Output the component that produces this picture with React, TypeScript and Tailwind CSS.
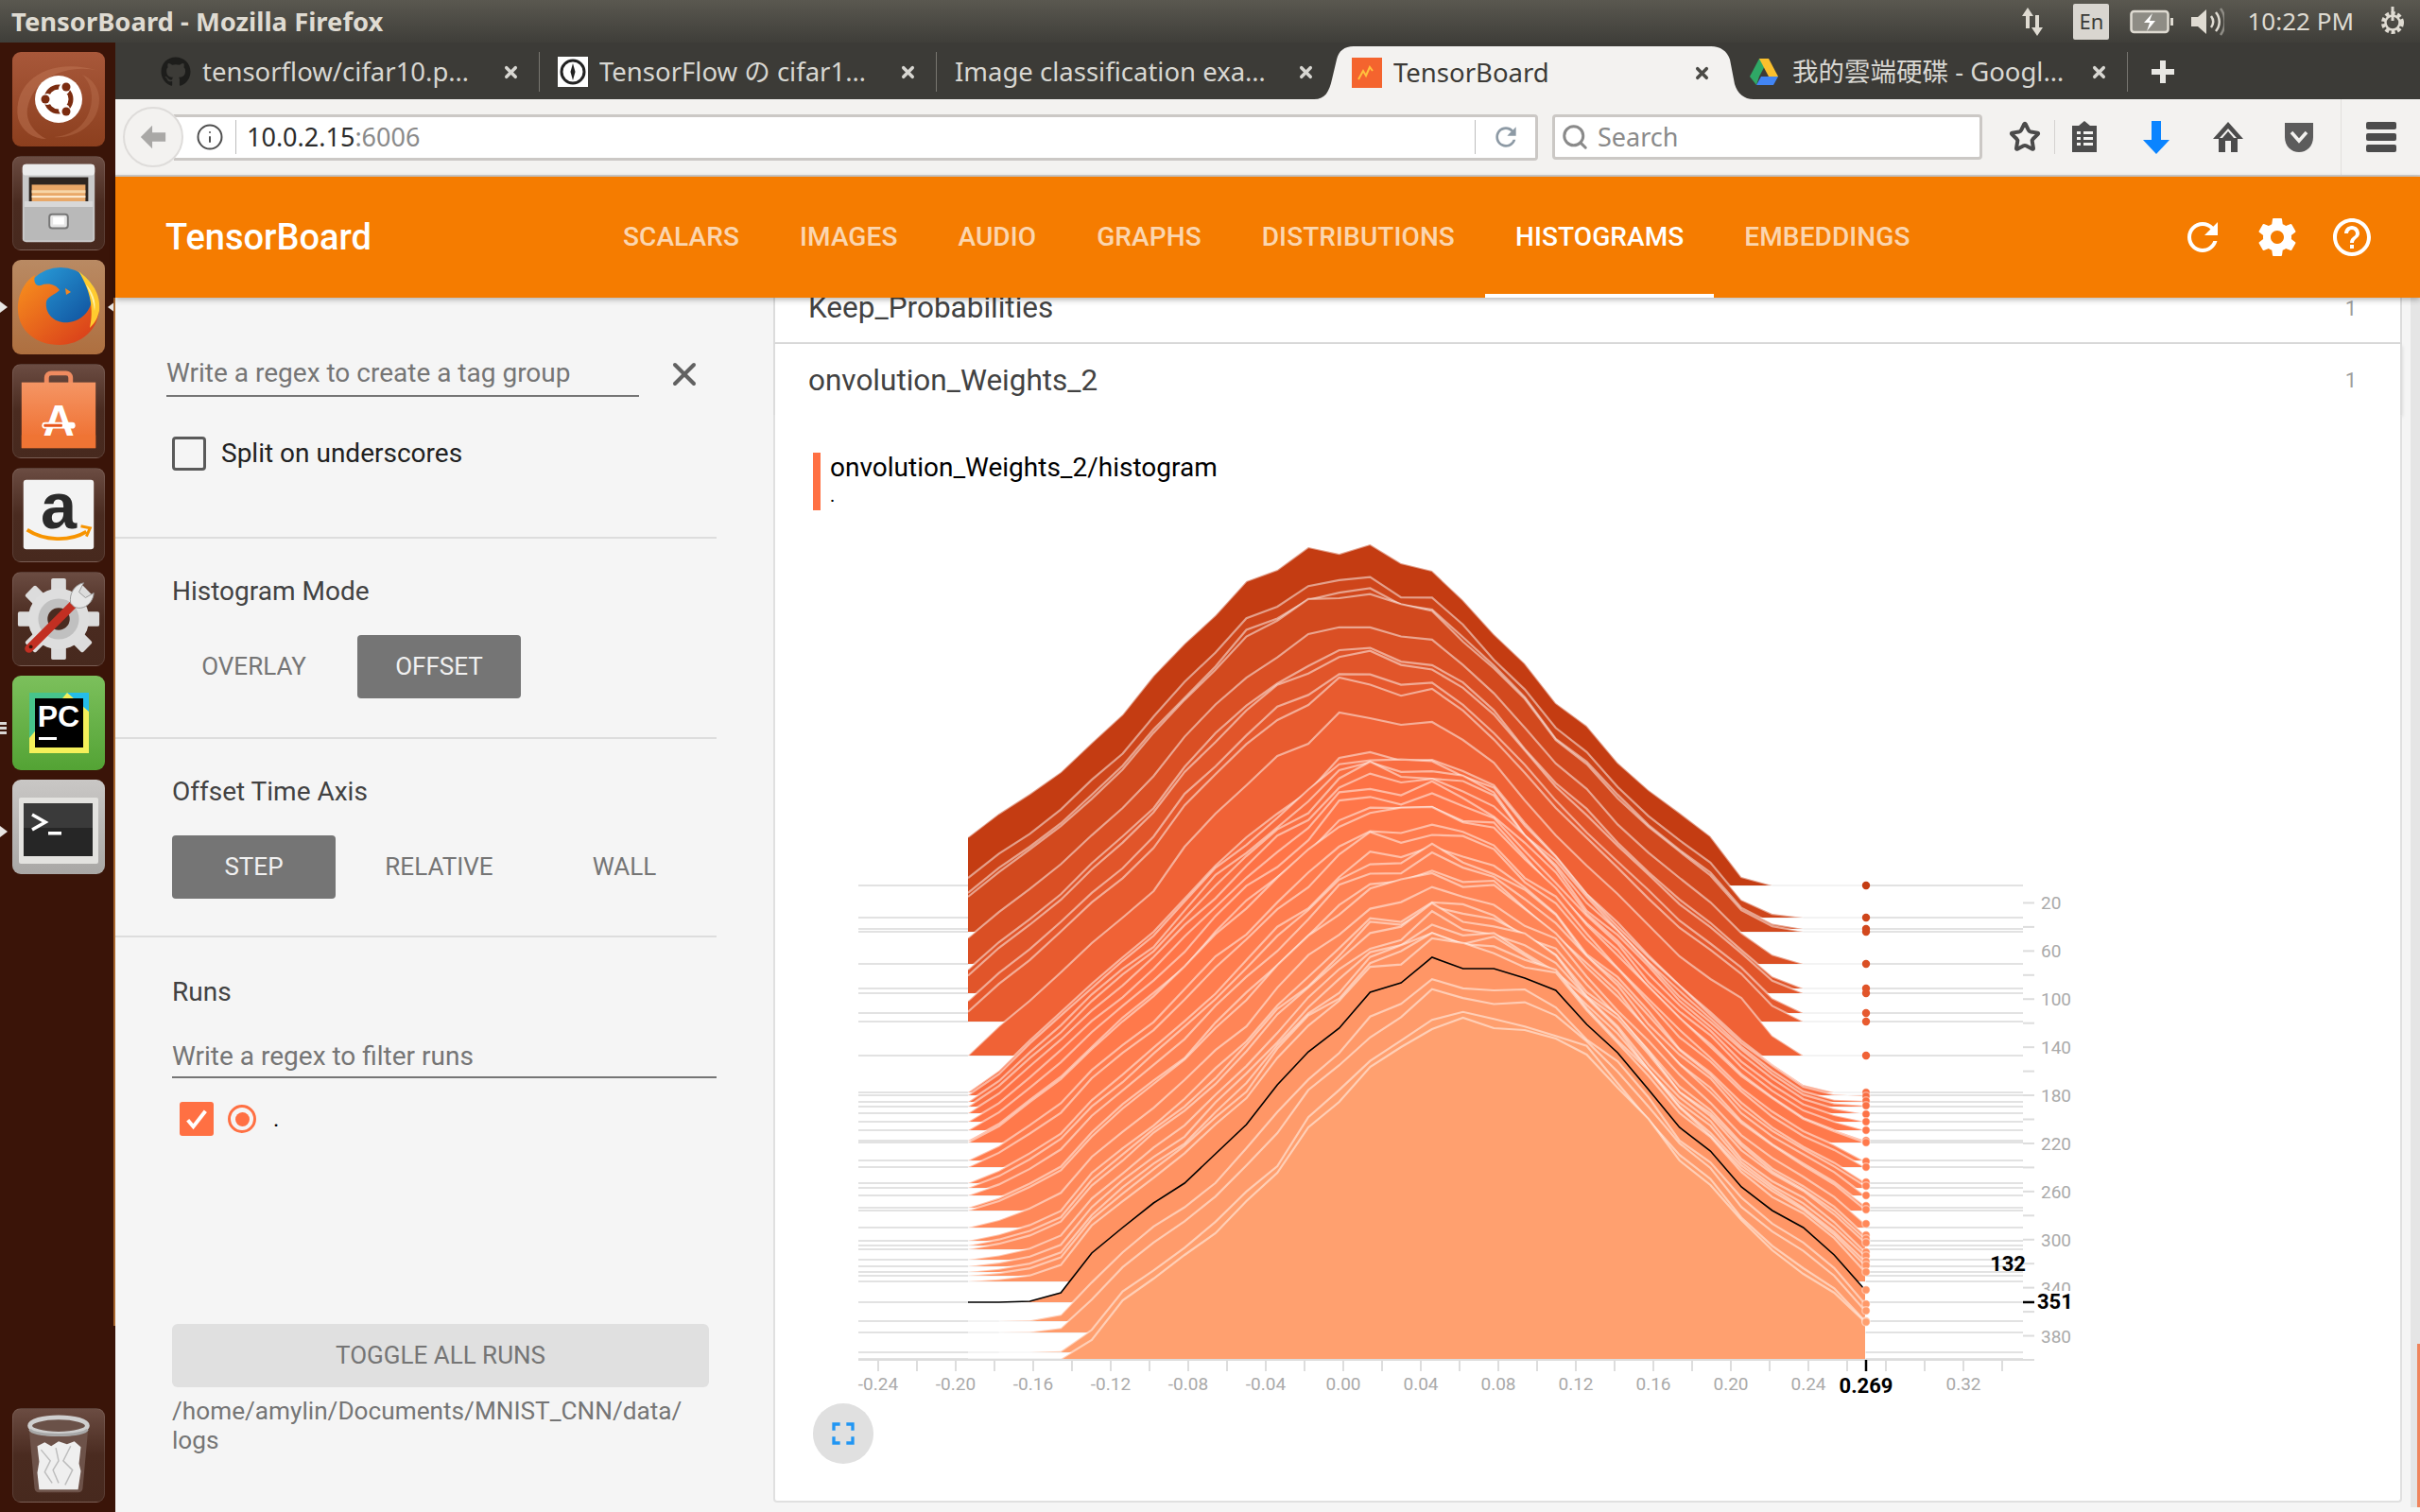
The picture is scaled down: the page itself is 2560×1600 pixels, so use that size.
import { X, Info, Search, Star } from 'lucide-react';
import { FaGithub } from 'react-icons/fa';

const chromeFont = "font-['Noto_Sans','Noto_Sans_CJK_TC',sans-serif]";
const roboto = "font-['Roboto',sans-serif]";

const refreshPath =
  'M17.65 6.35C16.2 4.9 14.21 4 12 4c-4.42 0-7.99 3.58-7.99 8s3.57 8 7.99 8c3.73 0 6.84-2.55 7.73-6h-2.08c-.82 2.33-3.04 4-5.65 4-3.31 0-6-2.69-6-6s2.69-6 6-6c1.66 0 3.14.69 4.22 1.78L13 11h7V4l-2.35 2.35z';

// ---- launcher ----

const darkTile = 'border border-white/10 bg-gradient-to-b from-[#6b4c42] via-[#4a2b20] to-[#47291e]';

function Tile({ className, children }: { className: string; children: React.ReactNode }) {
  return <div className={`h-[100px] w-[98px] shrink-0 overflow-hidden rounded-[9px] ${className}`}>{children}</div>;
}

function UbuntuIcon() {
  return (
    <svg viewBox="0 0 98 100" className="h-full w-full">
      <path d="M6 70C0 30 40 4 92 20 60 12 22 26 16 60c-2 14 8 26 20 32C22 92 10 84 6 70z" fill="#c47a58" opacity=".45" />
      <path d="M92 50c0 26-24 42-48 40 26-2 40-20 40-42 0-10-4-18-10-24 10 4 18 14 18 26z" fill="#c47a58" opacity=".35" />
      <circle cx="49" cy="50" r="25" fill="#fff" />
      <circle cx="49" cy="50" r="13" fill="none" stroke="#7b2c10" strokeWidth="5" />
      <circle cx="37" cy="50" r="6" fill="#fff" />
      <circle cx="55" cy="39" r="6" fill="#fff" />
      <circle cx="55" cy="61" r="6" fill="#fff" />
      <circle cx="35" cy="50" r="4.5" fill="#7b2c10" />
      <circle cx="57" cy="37" r="4.5" fill="#7b2c10" />
      <circle cx="57" cy="63" r="4.5" fill="#7b2c10" />
    </svg>
  );
}

function FilesIcon() {
  return (
    <svg viewBox="0 0 98 100" className="h-full w-full">
      <rect x="10" y="8" width="78" height="84" rx="4" fill="#c9c9c9" />
      <rect x="10" y="8" width="78" height="12" rx="4" fill="#ececec" />
      <rect x="17" y="22" width="64" height="26" fill="#2d2520" />
      <rect x="20" y="30" width="58" height="18" fill="#e9a868" />
      <rect x="20" y="36" width="58" height="3" fill="#f7d6a8" />
      <rect x="20" y="42" width="58" height="2" fill="#fff0d8" />
      <path d="M12 48h74v42H12z" fill="#b9b9b9" />
      <path d="M12 48h74v6H12z" fill="#d8d8d8" />
      <rect x="39" y="62" width="20" height="15" rx="3" fill="#e6e6e6" stroke="#777" strokeWidth="2" />
      <rect x="43" y="65" width="12" height="8" fill="#fff" />
    </svg>
  );
}

function FirefoxIcon() {
  return (
    <svg viewBox="0 0 98 100" className="h-full w-full">
      <defs>
        <linearGradient id="ffBlue" x1="0" y1="0" x2="1" y2="1">
          <stop offset="0" stopColor="#2aa3de" />
          <stop offset="1" stopColor="#0b3f8f" />
        </linearGradient>
        <linearGradient id="ffFox" x1="0" y1="0" x2="1" y2="1">
          <stop offset="0" stopColor="#f8921e" />
          <stop offset="1" stopColor="#d6361a" />
        </linearGradient>
      </defs>
      <circle cx="51" cy="48" r="40" fill="url(#ffBlue)" />
      <path d="M6 54C5 36 14 22 24 16 22 24 25 28 30 27 38 24 46 26 50 32 44 38 38 38 36 44 34 58 46 68 60 66 76 64 86 50 84 36L92 50C92 74 72 90 50 90 24 90 7 74 6 54z" fill="url(#ffFox)" />
      <path d="M70 12C84 22 94 36 92 54 90 62 88 66 82 72 86 54 84 34 70 12z" fill="#ffcb2f" />
      <path d="M78 26c7 8 11 18 9 28-1-10-4-18-9-28z" fill="#fff3a8" />
      <path d="M56 30l6 4-5 3z" fill="#f6861f" />
    </svg>
  );
}

function BagIcon() {
  return (
    <svg viewBox="0 0 98 100" className="h-full w-full">
      <defs>
        <linearGradient id="bag" x1="0" y1="0" x2="0" y2="1">
          <stop offset="0" stopColor="#f59564" />
          <stop offset="1" stopColor="#ee6c2b" />
        </linearGradient>
      </defs>
      <path d="M36 30V14a5 5 0 015-5h16a5 5 0 015 5v16" fill="none" stroke="#ef8b60" strokeWidth="5" />
      <rect x="9" y="19" width="80" height="71" fill="url(#bag)" />
      <rect x="9" y="76" width="80" height="14" fill="#ef7434" />
      <text x="49" y="77" textAnchor="middle" fontSize="47" fontWeight="700" fill="#fff" fontFamily="Liberation Sans">A</text>
      <rect x="31" y="62" width="36" height="7" rx="3.5" fill="#fff" />
      <rect x="33" y="64" width="20" height="3" rx="1" fill="#e8541a" />
    </svg>
  );
}

function AmazonIcon() {
  return (
    <svg viewBox="0 0 98 100" className="h-full w-full">
      <rect x="11" y="12" width="76" height="75" rx="3" fill="#f3f3f3" />
      <text x="49" y="64" textAnchor="middle" fontSize="70" fontWeight="700" fill="#2a2a2a" fontFamily="Liberation Sans">a</text>
      <path d="M15 66c18 12 46 13 64 2" fill="none" stroke="#f79400" strokeWidth="4" />
      <path d="M73 62l10 2-4 9" fill="none" stroke="#f79400" strokeWidth="3" />
    </svg>
  );
}

function ToolsIcon() {
  const teeth = [0, 45, 90, 135, 180, 225, 270, 315];
  return (
    <svg viewBox="0 0 98 100" className="h-full w-full">
      {teeth.map((a) => (
        <rect key={a} x="41" y="6" width="16" height="18" rx="2" fill="#dcdcdc" transform={`rotate(${a} 49 50)`} />
      ))}
      <circle cx="49" cy="50" r="33" fill="#dedede" />
      <circle cx="49" cy="50" r="22" fill="#c0c0c0" />
      <circle cx="49" cy="50" r="12" fill="#4a2b20" />
      <path d="M17 82L66 33" stroke="#c22f22" strokeWidth="9" strokeLinecap="round" />
      <circle cx="19" cy="80" r="2" fill="#3a1408" />
      <path d="M62 33c-2-10 4-20 14-22l-5 10 7 6 9-5c-1 12-12 19-21 15z" fill="#e6e6e6" stroke="#999" strokeWidth="1" />
    </svg>
  );
}

function PyCharmIcon() {
  return (
    <svg viewBox="0 0 98 100" className="h-full w-full">
      <rect x="18" y="18" width="63" height="64" fill="#f4f05a" />
      <path d="M18 18h40L18 66z" fill="#47c48c" />
      <path d="M58 18h23v20z" fill="#25bde8" />
      <rect x="24" y="24" width="51" height="52" fill="#000" />
      <text x="49" y="54" textAnchor="middle" fontSize="32" fontWeight="700" fill="#fff" fontFamily="Liberation Sans">PC</text>
      <rect x="28" y="65" width="19" height="3" fill="#fff" />
    </svg>
  );
}

function TerminalIcon() {
  return (
    <svg viewBox="0 0 98 100" className="h-full w-full">
      <rect x="7" y="19" width="84" height="70" rx="2" fill="#e3e2df" />
      <rect x="12" y="25" width="73" height="56" fill="#262626" />
      <rect x="12" y="25" width="73" height="26" fill="#3a3a3a" />
      <path d="M21 37l14 8-14 8" fill="none" stroke="#fff" strokeWidth="3.5" />
      <rect x="38" y="55" width="14" height="3.5" fill="#fff" />
    </svg>
  );
}

function TrashIcon() {
  return (
    <svg viewBox="0 0 98 100" className="h-full w-full">
      <path d="M17 20l6 66a5 5 0 005 4h42a5 5 0 005-4l6-66z" fill="#6d5249" />
      <path d="M26 40l8-4 7 4 8-5 9 3 8-3 7 6-2 18 2 8-3 20H28l-2-18 2-12z" fill="#efefef" />
      <path d="M30 44l10 12-6 12 8 12M62 40l-8 16 10 10-8 16M46 42l3 14-6 10 6 14" fill="none" stroke="#bdbdbd" strokeWidth="1.5" />
      <ellipse cx="49" cy="18" rx="31" ry="9" fill="#6a5148" stroke="#cfcfcf" strokeWidth="5" />
      <path d="M18 22c4 8 58 8 62 0" fill="none" stroke="#a8a8a8" strokeWidth="3" />
    </svg>
  );
}

function Launcher() {
  return (
    <div className="relative flex h-[1555px] w-[122px] shrink-0 flex-col items-center gap-[10px] bg-[#3a1408] pl-[1px] pt-[10px] pb-[10px]">
      <Tile className="bg-gradient-to-b from-[#a8583a] to-[#8c3f1e]"><UbuntuIcon /></Tile>
      <Tile className={darkTile}><FilesIcon /></Tile>
      <Tile className="bg-gradient-to-b from-[#b98a63] to-[#ae6f3f]"><FirefoxIcon /></Tile>
      <Tile className={darkTile}><BagIcon /></Tile>
      <Tile className={darkTile}><AmazonIcon /></Tile>
      <Tile className={darkTile}><ToolsIcon /></Tile>
      <Tile className="bg-gradient-to-b from-[#7cc05c] to-[#53a334]"><PyCharmIcon /></Tile>
      <Tile className="bg-gradient-to-b from-[#c9c7c5] to-[#a9a7a5]"><TerminalIcon /></Tile>
      <div className="mt-auto" />
      <Tile className={darkTile}><TrashIcon /></Tile>
      {/* running-app pips */}
      <span className="absolute left-0 top-[274px] h-0 w-0 border-y-[6px] border-l-[8px] border-y-transparent border-l-[#e8e6e3]" />
      <span className="absolute right-0 top-[274px] h-0 w-0 border-y-[6px] border-r-[8px] border-y-transparent border-r-[#e8e6e3]" />
      <span className="absolute left-0 top-[719px] flex flex-col gap-[2px]">
        <span className="h-[3px] w-[7px] bg-[#d8d6d3]" />
        <span className="h-[3px] w-[7px] bg-[#d8d6d3]" />
        <span className="h-[3px] w-[7px] bg-[#d8d6d3]" />
      </span>
      <span className="absolute left-0 top-[829px] h-0 w-0 border-y-[6px] border-l-[8px] border-y-transparent border-l-[#e8e6e3]" />
      <span className="absolute right-0 top-[270px] h-[1088px] w-[2px] bg-[#a8672e]" />
    </div>
  );
}

// ---- window chrome ----

function TitleBar() {
  return (
    <div className={`flex h-[45px] items-center bg-gradient-to-b from-[#5a5850] to-[#3f3e39] pl-[12px] ${chromeFont}`}>
      <span className="text-[27.4px] font-bold text-[#dfdbd2]">TensorBoard - Mozilla Firefox</span>
      <div className="ml-auto flex items-center text-[#dfdbd2]">
        <svg viewBox="0 0 30 38" className="h-[38px] w-[30px]">
          <path d="M10 4l-6 9h4v13h4V13h4zM20 34l6-9h-4V12h-4v13h-4z" fill="#dfdbd2" />
        </svg>
        <span className="ml-[28px] flex h-[38px] w-[38px] items-center justify-center rounded-[2px] bg-[#d9d6d0] text-[22px] text-[#3c3b37]">En</span>
        <svg viewBox="0 0 46 26" className="ml-[22px] h-[26px] w-[46px]">
          <rect x="1.5" y="2" width="39" height="22" rx="3" fill="#8e8c85" stroke="#dfdbd2" strokeWidth="2.5" />
          <path d="M43 9h3v8h-3z" fill="#dfdbd2" />
          <path d="M24 4l-9 10 6 0-3 9 9-11-6 0z" fill="#fff" />
        </svg>
        <svg viewBox="0 0 38 34" className="ml-[16px] h-[34px] w-[38px]">
          <path d="M3 12h7l9-8v26l-9-8H3z" fill="#dfdbd2" />
          <path d="M24 11c3 4 3 8 0 12M29 7c5 6 5 14 0 20" fill="none" stroke="#dfdbd2" strokeWidth="2.5" />
          <path d="M34 3c6 8 6 20 0 28" fill="none" stroke="#8e8c85" strokeWidth="2.5" />
        </svg>
        <span className="ml-[24px] text-[26px] text-[#dfdbd2]">10:22 PM</span>
        <svg viewBox="0 0 32 36" className="ml-[25px] mr-[13px] h-[36px] w-[32px]">
          <circle cx="16" cy="19" r="10" fill="none" stroke="#dfdbd2" strokeWidth="4" strokeDasharray="4 2.5" />
          <circle cx="16" cy="19" r="7.5" fill="none" stroke="#dfdbd2" strokeWidth="2.5" />
          <path d="M16 2v15" stroke="#dfdbd2" strokeWidth="3" />
        </svg>
      </div>
    </div>
  );
}

function CloseX({ dark }: { dark?: boolean }) {
  return <X size={19} strokeWidth={4.5} className={dark ? 'shrink-0 text-[#4a4a46]' : 'shrink-0 text-[#d8d7d2]'} />;
}

function TabStrip() {
  const tabText = 'flex-1 truncate text-[27.5px] leading-[38px]';
  return (
    <div className={`flex h-[60px] items-end bg-[#3c3b37] pl-[28px] ${chromeFont}`}>
      <div className="mb-[8px] flex h-[42px] w-[421px] items-center gap-[12px] border-r border-[#77756f] pl-[20px] pr-[20px]">
        <FaGithub size={32} className="shrink-0 text-[#1d1d1b]" />
        <span className={`${tabText} text-[#d8d7d2]`}>tensorflow/cifar10.p…</span>
        <CloseX />
      </div>
      <div className="mb-[8px] flex h-[42px] w-[420px] items-center gap-[12px] border-r border-[#77756f] pl-[19px] pr-[20px]">
        <svg viewBox="0 0 32 32" className="h-[32px] w-[32px] shrink-0">
          <rect width="32" height="32" fill="#fff" />
          <circle cx="16" cy="16" r="12" fill="none" stroke="#222" strokeWidth="3" />
          <path d="M16 7l2.5 9L16 25l-2.5-9z" fill="#222" />
        </svg>
        <span className={`${tabText} text-[#d8d7d2]`}>TensorFlow の cifar1…</span>
        <CloseX />
      </div>
      <div className="mb-[8px] flex h-[42px] w-[421px] items-center pl-[19px] pr-[21px]">
        <span className={`${tabText} text-[#d8d7d2]`}>Image classification exa…</span>
        <CloseX />
      </div>
      <div className="relative z-10 -ml-[22px] flex h-[56px] w-[465px] items-center gap-[12px] pl-[40px] pr-[45px]">
        <svg viewBox="0 0 465 56" className="absolute inset-0 h-full w-full">
          <path d="M0 56c12 0 16-8 19-21l5-21C26 5 32 0 42 0h378c10 0 17 5 20 14l5 26c3 10 10 16 20 16z" fill="#f3f2f0" />
        </svg>
        <svg viewBox="0 0 32 32" className="relative h-[32px] w-[32px] shrink-0">
          <rect width="32" height="32" fill="#f4642e" />
          <path d="M7 23l5-9 3 5 4-9 3 4" fill="none" stroke="#ffc13d" strokeWidth="2" />
        </svg>
        <span className={`${tabText} relative text-[#3c3b37]`}>TensorBoard</span>
        <span className="relative"><CloseX dark /></span>
      </div>
      <div className="relative z-20 -ml-[23px] mb-[8px] flex h-[42px] w-[419px] items-center gap-[14px] border-r border-[#77756f] pl-[18px] pr-[20px]">
        <svg viewBox="0 0 32 32" className="h-[32px] w-[32px] shrink-0">
          <path d="M11 2h10L11 21H1z" fill="#2fa866" />
          <path d="M21 2l10 19H21L11 2z" fill="#fbc02d" />
          <path d="M8 30l5-9h18l-5 9z" fill="#4285f4" />
          <path d="M1 21h10l-3 9z" fill="#2fa866" />
        </svg>
        <span className={`${tabText} text-[#d8d7d2]`}>我的雲端硬碟 - Googl…</span>
        <CloseX />
      </div>
      <svg viewBox="0 0 28 28" className="mb-[15px] ml-[23px] h-[28px] w-[28px]">
        <path d="M11 2h6v9h9v6h-9v9h-6v-9H2v-6h9z" fill="#e8e7e3" />
      </svg>
    </div>
  );
}

function Toolbar() {
  return (
    <div className={`flex h-[82px] items-center border-b-2 border-[#cfcdca] bg-[#f3f2f0] pl-[8px] ${chromeFont}`}>
      <div className="relative z-10 flex h-[64px] w-[64px] shrink-0 items-center justify-center rounded-full border-2 border-[#dedcda] bg-[#f3f2f0]">
        <svg viewBox="0 0 32 32" className="h-[30px] w-[30px]">
          <path d="M15 3L2 16l13 13v-8h15V11H15z" fill="#a9a8a6" />
        </svg>
      </div>
      <div className="-ml-[10px] flex h-[49px] w-[1443px] shrink-0 items-center rounded-r-[4px] border-[3px] border-l-0 border-[#cbc8c5] bg-white">
        <Info size={30} strokeWidth={1.6} className="ml-[23px] shrink-0 text-[#4f4f4f]" />
        <span className="ml-[12px] h-[36px] w-px bg-[#bdbdbd]" />
        <span className="ml-[11px] text-[27px] text-[#2b2b2b]">10.0.2.15<span className="text-[#8a8a8a]">:6006</span></span>
        <span className="ml-auto h-[36px] w-px bg-[#bdbdbd]" />
        <svg viewBox="0 0 24 24" className="ml-[16px] mr-[15px] h-[32px] w-[32px] shrink-0" fill="#8d9aa5"><path d={refreshPath} /></svg>
      </div>
      <div className="ml-[15px] flex h-[48px] w-[455px] shrink-0 items-center rounded-[4px] border-[3px] border-[#cbc8c5] bg-white">
        <Search size={30} strokeWidth={2.4} className="ml-[6px] shrink-0 text-[#8a8a8a]" />
        <span className="ml-[9px] text-[27px] text-[#8a8a8a]">Search</span>
      </div>
      <Star size={34} strokeWidth={2.8} className="ml-[28px] shrink-0 text-[#4a4a4a]" />
      <span className="ml-[14px] h-[36px] w-px bg-[#d5d3d0]" />
      <svg viewBox="0 0 32 36" className="ml-[15px] h-[36px] w-[32px] shrink-0">
        <path d="M3 6h7l6-5 6 5h7v28H3z" fill="#4c4c4c" />
        <path d="M8 12h4v3H8zm7 0h10v3H15zM8 18h4v3H8zm7 0h10v3H15zM8 24h4v3H8zm7 0h10v3H15z" fill="#f3f2f0" />
      </svg>
      <svg viewBox="0 0 30 36" className="ml-[45px] h-[36px] w-[30px] shrink-0">
        <path d="M10 1h10v20h9L15 36 1 21h9z" fill="#0a84ff" />
      </svg>
      <svg viewBox="0 0 34 36" className="ml-[44px] h-[36px] w-[34px] shrink-0">
        <path d="M17 2L1 20h6v14h7V22h6v12h7V20h6z" fill="#4c4c4c" />
        <path d="M17 9l-9 10h18z" fill="#f3f2f0" />
        <path d="M17 12l-6 7h12z" fill="#4c4c4c" />
      </svg>
      <svg viewBox="0 0 32 36" className="ml-[42px] h-[36px] w-[32px] shrink-0">
        <path d="M1 3h30v15c0 10-7 16-15 16S1 28 1 18z" fill="#5c5c5c" />
        <path d="M8 13l8 9 8-9" fill="none" stroke="#f3f2f0" strokeWidth="3.5" />
      </svg>
      <span className="ml-[28px] h-[80px] w-px bg-[#e2e0dd]" />
      <div className="ml-[26px] flex flex-col gap-[4px]">
        <span className="h-[8px] w-[32px] rounded-[2px] bg-[#4c4c4c]" />
        <span className="h-[8px] w-[32px] rounded-[2px] bg-[#4c4c4c]" />
        <span className="h-[8px] w-[32px] rounded-[2px] bg-[#4c4c4c]" />
      </div>
    </div>
  );
}

// ---- tensorboard ----

const navItems = ['SCALARS', 'IMAGES', 'AUDIO', 'GRAPHS', 'DISTRIBUTIONS', 'HISTOGRAMS', 'EMBEDDINGS'];

function Header() {
  return (
    <div className={`relative z-20 flex h-[128px] items-center bg-[#f57c00] shadow-[0_2px_6px_rgba(0,0,0,0.3)] pl-[53px] ${roboto}`}>
      <span className="w-[452px] text-[38px] font-medium text-white">TensorBoard</span>
      <nav className="flex h-full">
        {navItems.map((item) => (
          <div
            key={item}
            className={
              item === 'HISTOGRAMS'
                ? 'flex h-full items-center border-b-4 border-white px-[32px] pt-[4px] text-[28px] font-medium tracking-[0.1px] text-white'
                : 'flex h-full items-center px-[32px] text-[28px] font-medium tracking-[0.1px] text-white/70'
            }
          >
            {item}
          </div>
        ))}
      </nav>
      <div className="ml-auto flex items-center gap-[31px] pr-[48px]">
        <svg viewBox="0 0 24 24" className="h-[48px] w-[48px]" fill="#fff"><path d={refreshPath} /></svg>
        <svg viewBox="0 0 24 24" className="h-[48px] w-[48px]" fill="#fff"><path d="M19.43 12.98c.04-.32.07-.64.07-.98s-.03-.66-.07-.98l2.11-1.65c.19-.15.24-.42.12-.64l-2-3.46c-.12-.22-.39-.3-.61-.22l-2.49 1c-.52-.4-1.08-.73-1.69-.98l-.38-2.65C14.46 2.18 14.25 2 14 2h-4c-.25 0-.46.18-.49.42l-.38 2.65c-.61.25-1.17.59-1.69.98l-2.49-1c-.23-.09-.49 0-.61.22l-2 3.46c-.13.22-.07.49.12.64l2.11 1.65c-.04.32-.07.65-.07.98s.03.66.07.98l-2.11 1.65c-.19.15-.24.42-.12.64l2 3.46c.12.22.39.3.61.22l2.49-1c.52.4 1.08.73 1.69.98l.38 2.65c.03.24.24.42.49.42h4c.25 0 .46-.18.49-.42l.38-2.65c.61-.25 1.17-.59 1.69-.98l2.49 1c.23.09.49 0 .61-.22l2-3.46c.12-.22.07-.49-.12-.64l-2.11-1.65zM12 15.5c-1.93 0-3.5-1.57-3.5-3.5s1.57-3.5 3.5-3.5 3.5 1.57 3.5 3.5-1.57 3.5-3.5 3.5z" /></svg>
        <svg viewBox="0 0 24 24" className="h-[48px] w-[48px]" fill="#fff"><path d="M11 18h2v-2h-2v2zm1-16C6.48 2 2 6.48 2 12s4.48 10 10 10 10-4.48 10-10S17.52 2 12 2zm0 18c-4.41 0-8-3.59-8-8s3.59-8 8-8 8 3.59 8 8-3.59 8-8 8zm0-14c-2.21 0-4 1.79-4 4h2c0-1.1.9-2 2-2s2 .9 2 2c0 2-3 1.75-3 5h2c0-2.25 3-2.5 3-5 0-2.21-1.79-4-4-4z" /></svg>
      </div>
    </div>
  );
}

function ModeButton({ label, active }: { label: string; active?: boolean }) {
  return (
    <div
      className={
        active
          ? 'flex h-[67px] w-[173px] items-center justify-center rounded-[4px] bg-[#757575] text-[26px] text-white/90'
          : 'flex h-[67px] w-[173px] items-center justify-center text-[26px] text-[#757575]'
      }
    >
      {label}
    </div>
  );
}

function Sidebar() {
  return (
    <div className={`w-[696px] shrink-0 pr-[60px] ${roboto}`}>
      <div className="h-[255px] border-b-2 border-[#ddd] pt-[57px]">
        <div className="flex items-center pl-[54px]">
          <div className="h-[48px] w-[500px] border-b-2 border-[#757575] text-[28px] leading-[46px] text-[#757575]">Write a regex to create a tag group</div>
          <X size={40} strokeWidth={2.4} className="ml-[28px] text-[#616161]" />
        </div>
        <div className="mt-[39px] flex items-center pl-[60px]">
          <span className="h-[36px] w-[36px] rounded-[4px] border-[3px] border-[#5a5a5a]" />
          <span className="ml-[16px] text-[28px] text-[#212121]">Split on underscores</span>
        </div>
      </div>
      <div className="h-[212px] border-b-2 border-[#ddd] pl-[60px] pt-[35px]">
        <div className="pt-[1px] text-[28px] leading-[40px] text-[#424242]">Histogram Mode</div>
        <div className="mt-[26px] flex gap-[23px]">
          <ModeButton label="OVERLAY" />
          <ModeButton label="OFFSET" active />
        </div>
      </div>
      <div className="h-[210px] border-b-2 border-[#ddd] pl-[60px] pt-[35px]">
        <div className="pt-[1px] text-[28px] leading-[40px] text-[#424242]">Offset Time Axis</div>
        <div className="mt-[26px] flex gap-[23px]">
          <ModeButton label="STEP" active />
          <ModeButton label="RELATIVE" />
          <ModeButton label="WALL" />
        </div>
      </div>
      <div className="pl-[60px] pt-[38px]">
        <div className="text-[28px] leading-[40px] text-[#424242]">Runs</div>
        <div className="mt-[22px] h-[49px] border-b-2 border-[#757575] pt-[2px] text-[28px] leading-[47px] text-[#757575]">Write a regex to filter runs</div>
        <div className="mt-[25px] flex items-center pl-[8px]">
          <span className="flex h-[36px] w-[36px] items-center justify-center rounded-[3px] bg-[#ff7043]">
            <svg viewBox="0 0 24 24" className="h-[28px] w-[28px]"><path d="M4 13l5 6L20 5" fill="none" stroke="#fff" strokeWidth="3.4" /></svg>
          </span>
          <span className="ml-[15px] flex h-[30px] w-[30px] items-center justify-center rounded-full border-[3px] border-[#ff7043]">
            <span className="h-[15px] w-[15px] rounded-full bg-[#ff7043]" />
          </span>
          <span className="ml-[18px] text-[24px] text-black">.</span>
        </div>
        <div className="mt-[199px] flex h-[67px] w-[568px] items-center justify-center rounded-[6px] bg-[#e0e0e0] text-[26px] text-[#757575]">TOGGLE ALL RUNS</div>
        <div className="mt-[10px] text-[26.2px] leading-[31px] text-[#757575]">
          /home/amylin/Documents/MNIST_CNN/data/
          <br />
          logs
        </div>
      </div>
    </div>
  );
}

// ---- histogram chart (coordinates in the svg are page pixels) ----

const baselines = [936, 970, 982, 985, 1019, 1045, 1050, 1071, 1080, 1116, 1155, 1158, 1165, 1170, 1177, 1186, 1195, 1206, 1208, 1227, 1234, 1251, 1256, 1264, 1277, 1280, 1298, 1312, 1317, 1321, 1332, 1339, 1345, 1349, 1355, 1377, 1397, 1409, 1430, 1437];
const hoverDots = [936, 970, 982, 985, 1019, 1045, 1050, 1071, 1080, 1116, 1155, 1159, 1164, 1169, 1178, 1186, 1195, 1206, 1208, 1228, 1234, 1250, 1254, 1264, 1275, 1279, 1294, 1306, 1310, 1314, 1324, 1328, 1334, 1338, 1345, 1364, 1379, 1386, 1397, 1398];

const binX = Array.from({ length: 30 }, (_, k) => 1024 + (k * 949) / 29);

const hoverSeries = 35;
const keyCurves: Record<number, number[]> = {
  0: [885, 860, 839, 816, 785, 755, 714, 680, 650, 614, 602, 578, 585, 575, 595, 603, 634, 670, 701, 743, 767, 806, 835, 859, 884, 927, 936, 936, 936, 936],
  9: [1116, 1085, 1058, 1028, 997, 970, 942, 895, 860, 830, 799, 786, 753, 759, 766, 763, 782, 806, 846, 883, 915, 945, 978, 1011, 1035, 1055, 1095, 1116, 1116, 1116],
  10: [1155, 1132, 1100, 1070, 1040, 1012, 985, 950, 915, 885, 860, 837, 801, 795, 804, 803, 815, 830, 870, 905, 945, 975, 1010, 1042, 1070, 1100, 1125, 1147, 1155, 1155],
  35: [1377, 1377, 1376, 1367, 1325, 1298, 1272, 1251, 1220, 1189, 1147, 1112, 1087, 1049, 1039, 1012, 1024, 1024, 1034, 1047, 1083, 1113, 1152, 1192, 1217, 1255, 1280, 1298, 1327, 1364],
  39: [1437, 1437, 1437, 1437, 1417, 1375, 1352, 1327, 1304, 1270, 1240, 1192, 1165, 1128, 1107, 1088, 1076, 1087, 1089, 1098, 1115, 1150, 1183, 1227, 1253, 1290, 1322, 1347, 1367, 1398],
};
const keyIds = [0, 9, 10, 35, 39];

const colorStops: [number, number[]][] = [
  [0, [0xc4, 0x3c, 0x12]],
  [0.1, [0xd2, 0x49, 0x1e]],
  [0.36, [0xf0, 0x62, 0x36]],
  [0.5, [0xff, 0x75, 0x48]],
  [1, [0xff, 0xa0, 0x6f]],
];

function seriesColor(baseline: number) {
  const t = (baseline - 936) / 501;
  for (let s = 1; s < colorStops.length; s++) {
    const [t0, c0] = colorStops[s - 1];
    const [t1, c1] = colorStops[s];
    if (t <= t1) {
      const f = (t - t0) / (t1 - t0);
      return `rgb(${c0.map((c, j) => Math.round(c + (c1[j] - c) * f)).join(',')})`;
    }
  }
  return 'rgb(255,160,111)';
}

function seriesHeights(i: number) {
  const b = baselines[i];
  const hi = keyIds.findIndex((id) => id >= i);
  const idB = keyIds[hi];
  const idA = hi === 0 ? idB : keyIds[hi - 1];
  const f = idA === idB ? 0 : (b - baselines[idA]) / (baselines[idB] - baselines[idA]);
  const isKey = keyIds.includes(i);
  const amount = i < 10 ? 0.006 : 0.01;
  return binX.map((_, k) => {
    const hA = baselines[idA] - keyCurves[idA][k];
    const hB = baselines[idB] - keyCurves[idB][k];
    const h = hA + (hB - hA) * f;
    if (k === 29) return b - hoverDots[i];
    const jitter = isKey ? 0 : (Math.sin(k * 2.1 + i * 0.9) + Math.sin(k * 4.7 + i * 1.7)) * amount;
    return Math.max(0, h * (1 + jitter));
  });
}

function HistogramChart() {
  const xTicks = Array.from({ length: 30 }, (_, n) => 929 + n * 41);
  const xLabels = ['-0.24', '-0.20', '-0.16', '-0.12', '-0.08', '-0.04', '0.00', '0.04', '0.08', '0.12', '0.16', '0.20', '0.24', '', '0.32'];
  const yLabels = [20, 60, 100, 140, 180, 220, 260, 300, 340, 380];
  const yTicks = [40, 80, 120, 160, 200, 240, 280, 320, 360, 400];
  const toY = (s: number) => 929 + s * 1.2725;

  return (
    <svg viewBox="820 560 1719 920" className="block h-[920px] w-[1719px]" fontFamily="Roboto, sans-serif">
      {baselines.map((b) => (
        <g key={b}>
          <path d={`M908 ${b}H1024`} stroke="#e2e2e2" strokeWidth="2" />
          <path d={`M1024 ${b}H1974`} stroke="#f3f3f3" strokeWidth="2" />
          <path d={`M1974 ${b}H2140`} stroke="#e2e2e2" strokeWidth="2" />
        </g>
      ))}

      {baselines.map((b, i) => {
        const isHover = i === hoverSeries;
        const heights = seriesHeights(i);
        const first = isHover ? 0 : Math.max(0, heights.findIndex((h) => h > 0) - (heights[0] > 0 ? 0 : 1));
        let last = 29;
        while (last > 0 && heights[last] <= 0) last--;
        const endK = Math.min(29, last + 1);
        const pts = binX.map((x, k) => `${x.toFixed(1)},${(b - heights[k]).toFixed(1)}`).slice(first, endK + 1);
        const start = binX[first].toFixed(1);
        const end = binX[endK].toFixed(1);
        return (
          <g key={b}>
            <polygon points={`${start},${b} ${pts.join(' ')} ${end},${b}`} fill={seriesColor(b)} />
            <polyline points={pts.join(' ')} fill="none" stroke={isHover ? '#000' : '#fff'} strokeOpacity={isHover ? 1 : 0.5} strokeWidth={isHover ? 1.6 : 2.2} />
          </g>
        );
      })}

      {hoverDots.map((y, i) => (
        <circle key={i} cx="1974" cy={y} r="4.2" fill={seriesColor(baselines[i])} stroke="#fff" strokeOpacity={i > 9 ? 0.4 : 0} strokeWidth="1.5" />
      ))}

      {/* x axis */}
      <path d="M908 1438H2140" stroke="#ddd" strokeWidth="2" />
      {xTicks.map((x) => (
        <path key={x} d={`M${x} 1438V1450`} stroke="#ddd" strokeWidth="2" />
      ))}
      {xLabels.map((l, n) => (
        <text key={n} x={929 + n * 82} y="1470" textAnchor="middle" fontSize="19" fill="#aaa">{l}</text>
      ))}
      <path d="M1974 1438V1450" stroke="#000" strokeWidth="2.5" />
      <rect x="1938" y="1452" width="76" height="26" fill="#fff" />
      <text x="1974" y="1473" textAnchor="middle" fontSize="22" fontWeight="700" fill="#000">0.269</text>

      {/* y axis */}
      {yTicks.map((s) => (
        <path key={s} d={`M2140 ${toY(s)}H2152`} stroke="#ddd" strokeWidth="2" />
      ))}
      {yLabels.map((s) => (
        <g key={s}>
          <path d={`M2140 ${toY(s)}H2152`} stroke="#ddd" strokeWidth="2" />
          <text x="2159" y={toY(s) + 7} fontSize="19" fill="#aaa">{s}</text>
        </g>
      ))}
      <rect x="2153" y="1365" width="44" height="26" fill="#fff" />
      <path d="M2140 1377H2152" stroke="#000" strokeWidth="2.5" />
      <text x="2155" y="1384" fontSize="22" fontWeight="700" fill="#000">351</text>
      <text x="2143" y="1344" textAnchor="end" fontSize="22" fontWeight="700" fill="#000">132</text>
    </svg>
  );
}

function MainPane() {
  return (
    <div className={`w-[1732px] shrink-0 overflow-hidden ${roboto}`}>
      <div className="-mt-[27px] flex h-[76px] w-[1723px] items-center justify-between border-x-2 border-b-2 border-[#dcdcdc] bg-white pl-[35px] pr-[46px] pt-[2px]">
        <span className="text-[31.5px] text-[#424242]">Keep_Probabilities</span>
        <span className="text-[22px] text-[#9e9e9e]">1</span>
      </div>
      <div className="flex h-[75px] w-[1723px] items-center justify-between border-x-2 border-[#dcdcdc] bg-white pl-[35px] pr-[46px] pt-[2px] shadow-[0_2px_4px_rgba(0,0,0,0.15)]">
        <span className="text-[31.5px] text-[#424242]">onvolution_Weights_2</span>
        <span className="text-[22px] text-[#9e9e9e]">1</span>
      </div>
      <div className="h-[1151px] w-[1723px] rounded-b-[4px] border-x-2 border-b-2 border-[#e0e0e0] bg-white pt-[40px]">
        <div className="ml-[40px] flex h-[61px]">
          <span className="w-[8px] bg-[#ff7043]" />
          <div className="-mt-[1px] ml-[10px] text-[28px] leading-[34px] text-black">
            onvolution_Weights_2/histogram
            <div className="text-[20px] leading-[24px]">.</div>
          </div>
        </div>
        <div className="mt-[21px]"><HistogramChart /></div>
        <div className="ml-[40px] mt-[4px] flex h-[64px] w-[64px] items-center justify-center rounded-full bg-[#e0e0e0]">
          <svg viewBox="0 0 24 24" className="h-[40px] w-[40px]" fill="#2196f3"><path d="M7 14H5v5h5v-2H7v-3zm-2-4h2V7h3V5H5v5zm12 7h-3v2h5v-5h-2v3zM14 5v2h3v3h2V5h-5z" /></svg>
        </div>
      </div>
    </div>
  );
}

function PageScrollbar() {
  return (
    <div className="w-[10px] shrink-0 bg-[#e5e5e5]">
      <div className="ml-[7px] mt-[1107px] h-[173px] w-[3px] bg-[#f0845c]" />
    </div>
  );
}

export default function App() {
  return (
    <div className="h-[1600px] w-[2560px] overflow-hidden bg-[#f5f5f5]">
      <TitleBar />
      <div className="flex">
        <Launcher />
        <div className="min-w-0 flex-1">
          <TabStrip />
          <Toolbar />
          <Header />
          <div className="flex">
            <Sidebar />
            <MainPane />
            <PageScrollbar />
          </div>
        </div>
      </div>
    </div>
  );
}
